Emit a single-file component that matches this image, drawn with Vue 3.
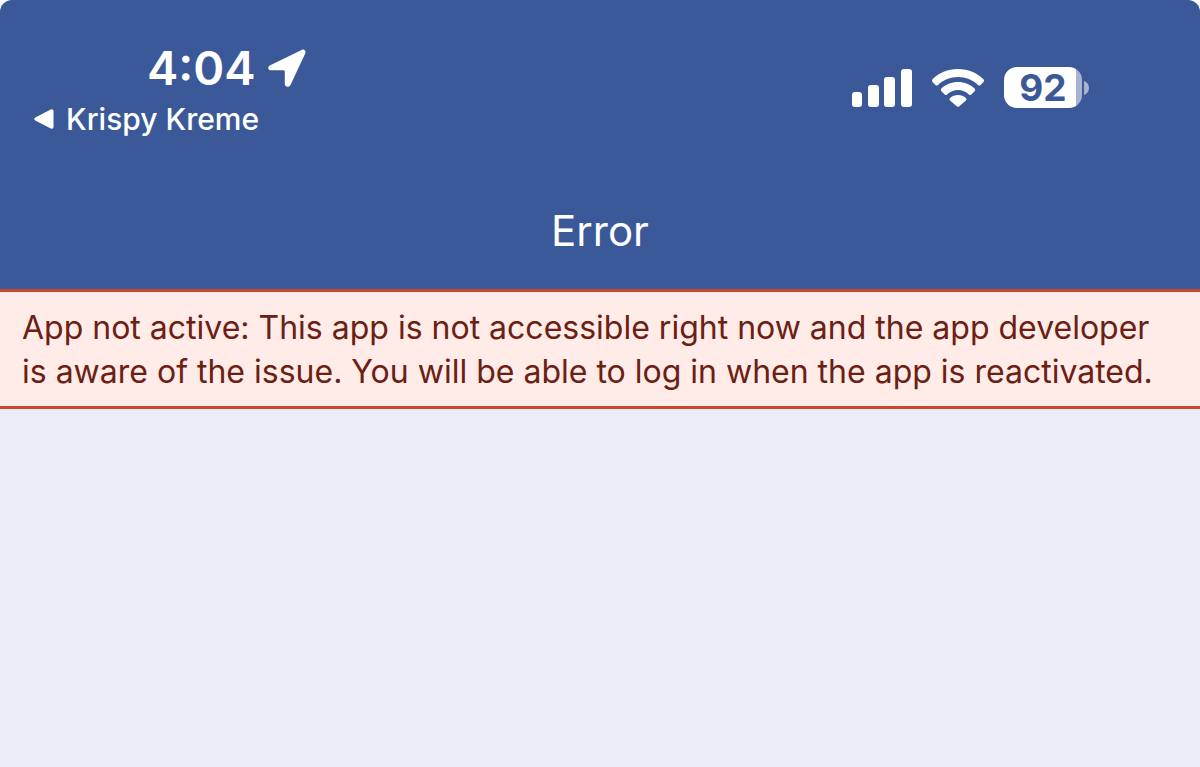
<script setup>
const title = 'Error'
const message =
  'App not active: This app is not accessible right now and the app developer is aware of the issue. You will be able to log in when the app is reactivated.'
const batteryLevel = 92
</script>

<template>
  <div class="screen">
    <header class="top">
      <div class="status">
        <div class="left">
          <div class="clock">
            <span>4:04</span>
            <svg class="location" width="38" height="38" viewBox="0 0 38 38" aria-hidden="true">
              <path
                d="M2.3 16.2 33.6 .9C36.200-.3 38.300 1.800 37.200 4.400L22.600 35.700C21 39 16.800 38.300 16.800 34.800V22.800C16.800 21.700 16.300 21.200 15.200 21.200H3.300C-.3 21.200-.9 17.700 2.300 16.200Z"
              />
            </svg>
          </div>
          <button type="button" class="back">
            <svg width="20" height="20" viewBox="0 0 20 20" aria-hidden="true">
              <path d="M1.300 8.600 16.800.600C18.400-.200 19.500.600 19.500 2.200V17.800C19.500 19.400 18.400 20.200 16.800 19.400L1.300 11.400C-.1 10.700-.1 9.300 1.300 8.600Z" />
            </svg>
            <span>Krispy Kreme</span>
          </button>
        </div>
        <div class="right">
          <svg width="60" height="38" viewBox="0 0 60 38" aria-label="Signal">
            <rect x="0" y="23" width="10" height="15" rx="3" />
            <rect x="16" y="16" width="11" height="22" rx="3" />
            <rect x="32" y="8" width="11" height="30" rx="3" />
            <rect x="49" y="0" width="11" height="38" rx="3" />
          </svg>
          <svg width="54" height="38" viewBox="0 0 54 38" aria-label="Wi-Fi">
            <path d="M27 0C37.200 0 46.400 4 52.500 10.200Q53.700 11.600 52.500 12.900L49.500 15.900Q48.300 17 47 15.900C41.600 10.900 34.700 8 27 8S12.400 10.900 7 15.900Q5.700 17 4.500 15.900L1.500 12.900Q.3 11.600 1.500 10.200C7.600 4 16.800 0 27 0Z" />
            <path d="M27 13C33.500 13 39.300 15.500 43.600 19.500Q44.900 20.900 43.600 22.200L40.300 25.400Q39.100 26.400 37.900 25.400C34.900 22.600 31.200 21 27 21S19.100 22.600 16.100 25.400Q14.900 26.400 13.700 25.400L10.400 22.200Q9.100 20.900 10.400 19.500C14.700 15.500 20.500 13 27 13Z" />
            <path d="M27 26C30.100 26 32.800 27.100 34.900 29Q36.100 30.200 34.900 31.400L28 37.400Q27 38.300 26 37.400L19.100 31.400Q17.900 30.200 19.100 29C21.200 27.100 23.900 26 27 26Z" />
          </svg>
          <div class="battery">
            <div class="cell">{{ batteryLevel }}</div>
            <svg class="cap" width="5" height="14" viewBox="0 0 5 14" aria-hidden="true">
              <path d="M0 0C3 1 5 3.500 5 7S3 13 0 14Z" />
            </svg>
          </div>
        </div>
      </div>
      <h1 class="title">{{ title }}</h1>
    </header>
    <p class="alert" role="alert">{{ message }}</p>
  </div>
</template>

<style>
body {
  margin: 0;
  background: #fff;
}
</style>

<style scoped>
.screen {
  min-height: 100vh;
  overflow: hidden;
  border-radius: 12px 12px 0 0;
  background: #eceef7;
  font-family: Inter, "Liberation Sans", sans-serif;
}

.top {
  padding: 40px 0 34px;
  background: #3b5998;
  color: #fff;
}

svg {
  display: block;
  fill: currentColor;
}

.status {
  display: flex;
  justify-content: space-between;
  align-items: flex-start;
  padding: 0 111px 0 34px;
}

.clock {
  display: flex;
  align-items: center;
  gap: 12px;
  padding-left: 113px;
  font-size: 47px;
  font-weight: 600;
  line-height: 56px;
}

.back {
  display: flex;
  align-items: center;
  gap: 12px;
  margin-top: 3px;
  padding: 0;
  border: 0;
  background: none;
  color: inherit;
  font: 500 30px/40px Inter, "Liberation Sans", sans-serif;
}

.right {
  display: flex;
  align-items: center;
  gap: 19px;
  padding-top: 27px;
}

.battery {
  display: flex;
  align-items: center;
  gap: 2px;
}

.cell {
  width: 78px;
  border-radius: 13px;
  background: linear-gradient(to right, #fff 92%, #a6b3d1 92%);
  color: #3b5998;
  font-size: 37px;
  font-weight: 700;
  line-height: 41px;
  text-align: center;
}

.cap {
  color: #a6b3d1;
}

.title {
  margin: 68px 0 0;
  font-size: 42px;
  font-weight: 400;
  line-height: 48px;
  text-align: center;
}

.alert {
  margin: 0;
  padding: 14px 22px 12px;
  border: solid #c9472c;
  border-width: 3px 0;
  background: #ffebe8;
  color: #6b2012;
  font-size: 32px;
  font-optical-sizing: none;
  line-height: 44px;
}
</style>
